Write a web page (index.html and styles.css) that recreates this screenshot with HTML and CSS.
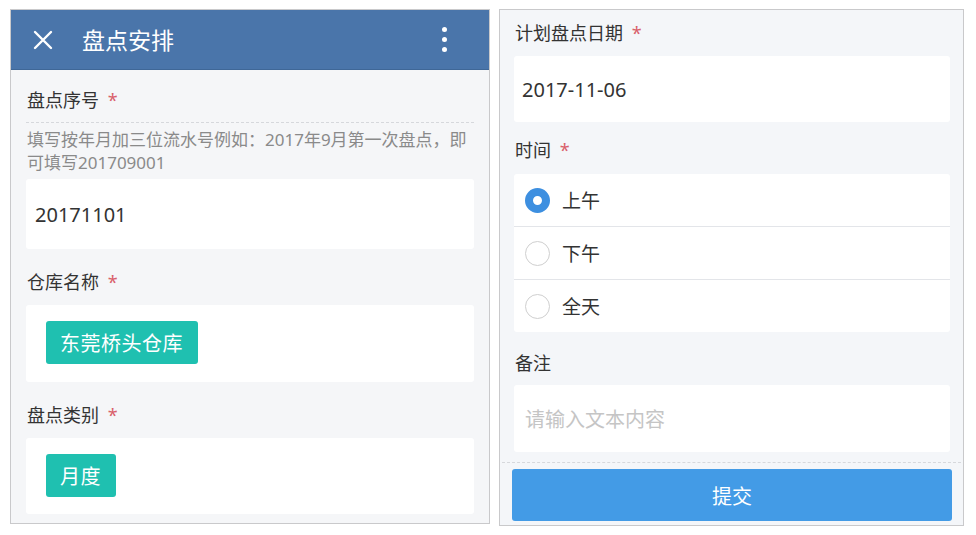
FILE: index.html
```html
<!DOCTYPE html>
<html lang="zh-CN">
<head>
<meta charset="utf-8">
<title>盘点安排</title>
<link rel="stylesheet" href="styles.css">
</head>
<body>
<div class="screens">
  <section class="panel panel-left">
    <header class="appbar">
      <svg class="close-icon" width="20" height="20" viewBox="0 0 20 20"><path d="M2 2 L18 18 M18 2 L2 18" stroke="#fff" stroke-width="2.4" stroke-linecap="round" fill="none"/></svg>
      <h1 class="appbar-title">盘点安排</h1>
      <span class="more-icon"><i></i><i></i><i></i></span>
    </header>
    <div class="form">
      <div class="label label-first">盘点序号 <span class="req">*</span></div>
      <div class="hint">填写按年月加三位流水号例如：2017年9月第一次盘点，即<br>可填写201709001</div>
      <div class="field field-input">20171101</div>
      <div class="label">仓库名称 <span class="req">*</span></div>
      <div class="field field-tags"><span class="tag">东莞桥头仓库</span></div>
      <div class="label">盘点类别 <span class="req">*</span></div>
      <div class="field field-tags field-last"><span class="tag">月度</span></div>
    </div>
  </section>
  <section class="panel panel-right">
    <div class="form form-right">
      <div class="label label-top">计划盘点日期 <span class="req">*</span></div>
      <div class="field field-date">2017-11-06</div>
      <div class="label label-time">时间 <span class="req">*</span></div>
      <div class="radio-group">
        <div class="radio-row"><span class="radio radio-on"></span><span class="radio-text">上午</span></div>
        <div class="radio-row"><span class="radio"></span><span class="radio-text">下午</span></div>
        <div class="radio-row"><span class="radio"></span><span class="radio-text">全天</span></div>
      </div>
      <div class="label label-note">备注</div>
      <div class="field field-textarea">请输入文本内容</div>
    </div>
    <div class="footer">
      <div class="submit">提交</div>
    </div>
  </section>
</div>
</body>
</html>
```
FILE: styles.css
```css
* { box-sizing: border-box; }
html, body { margin: 0; padding: 0; background: #fff; }
body {
  font-family: "Noto Sans", "Noto Sans CJK SC", sans-serif;
  color: #333;
}
.screens {
  display: flex;
  gap: 9px;
  padding: 9px 0 0 10px;
  align-items: flex-start;
}
.panel {
  border: 1px solid #c9c9cb;
  background: #f5f6f8;
  overflow: hidden;
}
.panel-left { width: 480px; height: 515px; }
.panel-right {
  width: 465px;
  height: 517px;
  background: #f4f6f9;
  display: flex;
  flex-direction: column;
}
.appbar {
  background: #4a75aa;
  border-bottom: 1px solid #3f6797;
  display: flex;
  align-items: center;
  padding-left: 22px;
  box-sizing: content-box;
  height: 59px;
}
.close-icon { flex: none; }
.appbar-title {
  margin: 0 0 0 29px;
  font-size: 23px;
  font-weight: 400;
  color: #fff;
  flex: 1;
  line-height: 30px;
}
.more-icon {
  width: 20px;
  margin-right: 35px;
  display: flex;
  flex-direction: column;
  align-items: center;
  gap: 5px;
}
.more-icon i {
  display: block;
  width: 5px;
  height: 5px;
  border-radius: 50%;
  background: #fff;
}
.form { padding: 0 15px; }
.label {
  font-size: 18px;
  line-height: 24px;
  padding-left: 1px;
  margin: 21px 0 11px;
  color: #333;
}
.label-first { margin-top: 18px; margin-bottom: 10px; }
.req { color: #d9606b; margin-left: 4px; }
.hint {
  border-top: 1px dashed #d6d8dc;
  padding: 5px 0 0 1px;
  font-size: 17px;
  line-height: 23px;
  color: #8a8a8a;
  margin-bottom: 5px;
}
.field {
  background: #fff;
  border-radius: 3px;
}
.field-input {
  height: 70px;
  display: flex;
  align-items: center;
  padding-left: 9px;
  font-size: 20px;
  color: #333;
}
.field-tags {
  height: 77px;
  padding: 16px 20px 0;
}
.field-last { height: 76px; }
.tag {
  display: inline-flex;
  align-items: center;
  height: 43px;
  padding: 0 15px 0 14px;
  background: #1fc0b0;
  color: #fff;
  font-size: 20px;
  letter-spacing: 0.5px;
  border-radius: 3px;
}
.form-right { padding: 0 13px 0 14px; }
.label-top { margin-top: 11px; margin-bottom: 11px; }
.field-date {
  height: 66px;
  display: flex;
  align-items: center;
  padding-left: 8px;
  font-size: 20px;
}
.label-time { margin-top: 16px; margin-bottom: 12px; }
.radio-group {
  background: #fff;
  border-radius: 3px;
}
.radio-row {
  height: 53px;
  display: flex;
  align-items: center;
  padding-left: 11px;
  border-bottom: 1px solid #e3e5e9;
}
.radio-row:last-child { border-bottom: 0; height: 52px; }
.radio {
  width: 25px;
  height: 25px;
  border-radius: 50%;
  border: 1px solid #cfcfcf;
  background: #fff;
  flex: none;
}
.radio-on {
  border: 8.5px solid #3d8fe0;
  background: #fff;
}
.radio-text {
  margin-left: 12px;
  font-size: 19px;
  color: #333;
}
.label-note { margin-top: 19px; margin-bottom: 10px; }
.field-textarea {
  height: 67px;
  display: flex;
  align-items: center;
  padding-left: 11px;
  font-size: 20px;
  color: #c5c5c5;
}
.footer {
  margin: 10px 2px 0;
  border-top: 1px dashed #d6d8dc;
  padding: 6px 9px 0 10px;
}
.submit {
  height: 52px;
  background: #439be6;
  border-radius: 3px;
  color: #fff;
  font-size: 20px;
  display: flex;
  align-items: center;
  justify-content: center;
}
```
